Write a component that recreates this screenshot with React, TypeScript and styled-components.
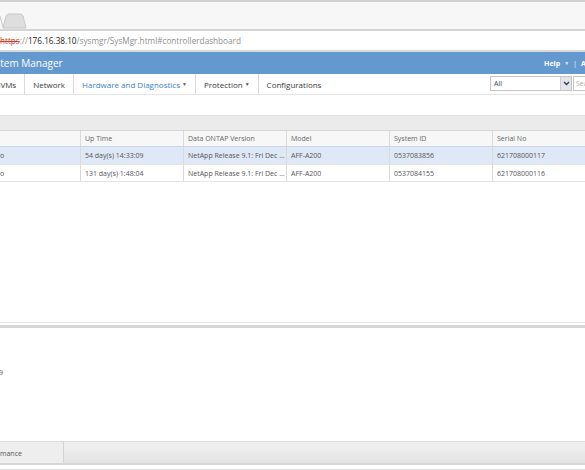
import React from "react";
import styled, { createGlobalStyle } from "styled-components";

const Global = createGlobalStyle`
  html, body { margin: 0; padding: 0; background: #fff; }
  body { font-family: "Open Sans", "Noto Sans", Arial, sans-serif; overflow: hidden; }
  #root { width: 585px; height: 470px; }
  * { box-sizing: border-box; }
`;

const Page = styled.div`
  width: 585px;
  height: 470px;
  overflow: hidden;
  display: flex;
  flex-direction: column;
  background: #fff;
`;

const TabStrip = styled.div`
  height: 31px;
  flex: none;
  background: #f7f7f7;
  border-top: 2px solid #d2d2d2;
  border-bottom: 2px solid #d4d4d4;
  display: flex;
  align-items: flex-end;
`;

const AddressBar = styled.div`
  height: 21px;
  flex: none;
  background: #fff;
  border-bottom: 2px solid #d8d8d8;
  display: flex;
  align-items: center;
  font-size: 8.2px;
  color: #8f8f8f;
  white-space: nowrap;
  overflow: hidden;
`;

const Scheme = styled.span`
  color: #d23a2a;
  text-decoration: line-through;
  text-decoration-color: #d23a2a;
`;

const Host = styled.span`
  color: #222;
`;

const Header = styled.div`
  height: 22px;
  flex: none;
  background: #6399cf;
  display: flex;
  align-items: center;
  justify-content: space-between;
  color: #fff;
  white-space: nowrap;
  overflow: hidden;
`;

const Title = styled.div`
  font-size: 10px;
  margin-left: -15px;
`;

const HeaderLinks = styled.div`
  display: flex;
  align-items: center;
  gap: 3px;
  font-size: 7px;
  font-weight: 700;
  margin-right: -49px;
`;

const Caret = styled.span`
  font-size: 5px;
  font-weight: 400;
  opacity: 0.85;
  margin-left: 1px;
`;

const Pipe = styled.span`
  font-weight: 400;
  margin: 0 1px;
`;

const Nav = styled.div`
  height: 21px;
  flex: none;
  background: #fff;
  border-bottom: 1px solid #e6e6e6;
  display: flex;
  align-items: stretch;
  white-space: nowrap;
  overflow: hidden;
`;

const NavItem = styled.div<{ $active?: boolean; $shift?: number; $last?: boolean }>`
  display: flex;
  align-items: center;
  gap: 2px;
  padding: 0 8px;
  margin-left: ${(p) => p.$shift ?? 0}px;
  border-right: ${(p) => (p.$last ? "none" : "1px solid #d9d9d9")};
  font-size: 8px;
  color: ${(p) => (p.$active ? "#3b82c4" : "#3a3a3a")};
`;

const NavCaret = styled.span`
  font-size: 5px;
  color: #555;
`;

const NavSpacer = styled.div`
  flex: 1;
`;

const Select = styled.div`
  width: 82px;
  flex: none;
  height: 15px;
  margin-top: 2px;
  border: 1px solid #c4c4c4;
  display: flex;
  align-items: stretch;
  font-size: 7px;
  color: #444;
  background: #fff;
`;

const SelectValue = styled.div`
  flex: 1;
  display: flex;
  align-items: center;
  padding-left: 3px;
`;

const SelectButton = styled.div`
  width: 11px;
  background: #e6e6e6;
  border-left: 1px solid #d0d0d0;
  display: flex;
  align-items: center;
  justify-content: center;
`;

const Search = styled.div`
  width: 40px;
  flex: none;
  height: 15px;
  margin-top: 2px;
  margin-left: 1px;
  margin-right: -28px;
  border: 1px solid #c4c4c4;
  font-size: 7px;
  color: #aaa;
  display: flex;
  align-items: center;
  padding-left: 2px;
`;

const ListPane = styled.div`
  height: 227px;
  flex: none;
  padding-top: 20px;
  display: flex;
  flex-direction: column;
`;

const Toolbar = styled.div`
  height: 15px;
  flex: none;
  background: #ebebeb;
  border-top: 1px solid #e3e3e3;
`;

const Row = styled.div<{ $kind: "head" | "selected" | "plain" }>`
  display: grid;
  flex: none;
  grid-template-columns: 80px repeat(5, 103px);
  height: ${(p) => (p.$kind === "head" ? 16 : 18)}px;
  background: ${(p) =>
    p.$kind === "head" ? "#f7f7f7" : p.$kind === "selected" ? "#dfe8f6" : "#fff"};
  border-top: 1px solid
    ${(p) => (p.$kind === "head" ? "#d6d6d6" : p.$kind === "selected" ? "#c9d6ea" : "#e4e4e4")};
  border-bottom: ${(p) => (p.$kind === "plain" ? "1px solid #e4e4e4" : "none")};
  font-size: 7px;
  color: ${(p) => (p.$kind === "head" ? "#666" : "#555")};
  white-space: nowrap;
`;

const Cell = styled.div<{ $first?: boolean }>`
  display: flex;
  align-items: center;
  padding-left: ${(p) => (p.$first ? 0 : 4)}px;
  border-left: ${(p) => (p.$first ? "none" : "1px solid #dadada")};
  overflow: hidden;
`;

const Splitter = styled.div`
  height: 6px;
  flex: none;
  border-top: 1px solid #e6e6e6;
  border-bottom: 3px solid #d6d6d6;
`;

const DetailPane = styled.div`
  flex: 1;
  padding-top: 40px;
  font-size: 7px;
  color: #555;
`;

const DetailValue = styled.div`
  margin-left: -1px;
`;

const BottomTabs = styled.div`
  height: 24px;
  flex: none;
  border-top: 1px solid #dcdcdc;
  border-bottom: 2px solid #d6d6d6;
  background: linear-gradient(#f0f0f0, #e4e4e4);
  display: flex;
`;

const BottomTab = styled.div`
  width: 64px;
  background: #eeeeee;
  border-right: 1px solid #d2d2d2;
  display: flex;
  align-items: center;
  font-size: 7px;
  color: #555;
  padding-top: 1px;
`;

const Footer = styled.div`
  height: 5px;
  flex: none;
  border-bottom: 1px solid #e0e0e0;
  background: #fff;
`;

const headers = ["", "Up Time", "Data ONTAP Version", "Model", "System ID", "Serial No"];
const rows = [
  ["o", "54 day(s) 14:33:09", "NetApp Release 9.1: Fri Dec ...", "AFF-A200", "0537083856", "621708000117"],
  ["o", "131 day(s) 1:48:04", "NetApp Release 9.1: Fri Dec ...", "AFF-A200", "0537084155", "621708000116"],
];

export default function App() {
  return (
    <Page>
      <Global />
      <TabStrip>
        <svg width="30" height="16" viewBox="0 0 30 16">
          <path d="M0 3 L3 14" stroke="#c8c8c8" strokeWidth="1" fill="none" />
          <path d="M3 15 L6 3 Q7 1 9 1 L20 1 Q22 1 23 3 L26 15 Z" fill="#dedede" stroke="#c6c6c6" strokeWidth="1" />
        </svg>
      </TabStrip>
      <AddressBar>
        <Scheme>https</Scheme>
        <span>://</span>
        <Host>176.16.38.10</Host>
        <span>/sysmgr/SysMgr.html#controllerdashboard</span>
      </AddressBar>
      <Header>
        <Title>System Manager</Title>
        <HeaderLinks>
          <span>Help</span>
          <Caret>▼</Caret>
          <Pipe>|</Pipe>
          <span>Administration</span>
        </HeaderLinks>
      </Header>
      <Nav>
        <NavItem $shift={-12}>SVMs</NavItem>
        <NavItem>Network</NavItem>
        <NavItem $active>
          Hardware and Diagnostics <NavCaret>▼</NavCaret>
        </NavItem>
        <NavItem>
          Protection <NavCaret>▼</NavCaret>
        </NavItem>
        <NavItem $last>Configurations</NavItem>
        <NavSpacer />
        <Select>
          <SelectValue>All</SelectValue>
          <SelectButton>
            <svg width="7" height="5" viewBox="0 0 7 5">
              <path d="M1 1 L3.5 3.5 L6 1" stroke="#1f3f7a" strokeWidth="1.4" fill="none" />
            </svg>
          </SelectButton>
        </Select>
        <Search>Search</Search>
      </Nav>
      <ListPane>
        <Toolbar />
        <Row $kind="head">
          {headers.map((h, i) => (
            <Cell key={i} $first={i === 0}>{h}</Cell>
          ))}
        </Row>
        {rows.map((r, ri) => (
          <Row key={ri} $kind={ri === 0 ? "selected" : "plain"}>
            {r.map((c, i) => (
              <Cell key={i} $first={i === 0}>{c}</Cell>
            ))}
          </Row>
        ))}
      </ListPane>
      <Splitter />
      <DetailPane>
        <DetailValue>9</DetailValue>
      </DetailPane>
      <BottomTabs>
        <BottomTab>mance</BottomTab>
      </BottomTabs>
      <Footer />
    </Page>
  );
}
